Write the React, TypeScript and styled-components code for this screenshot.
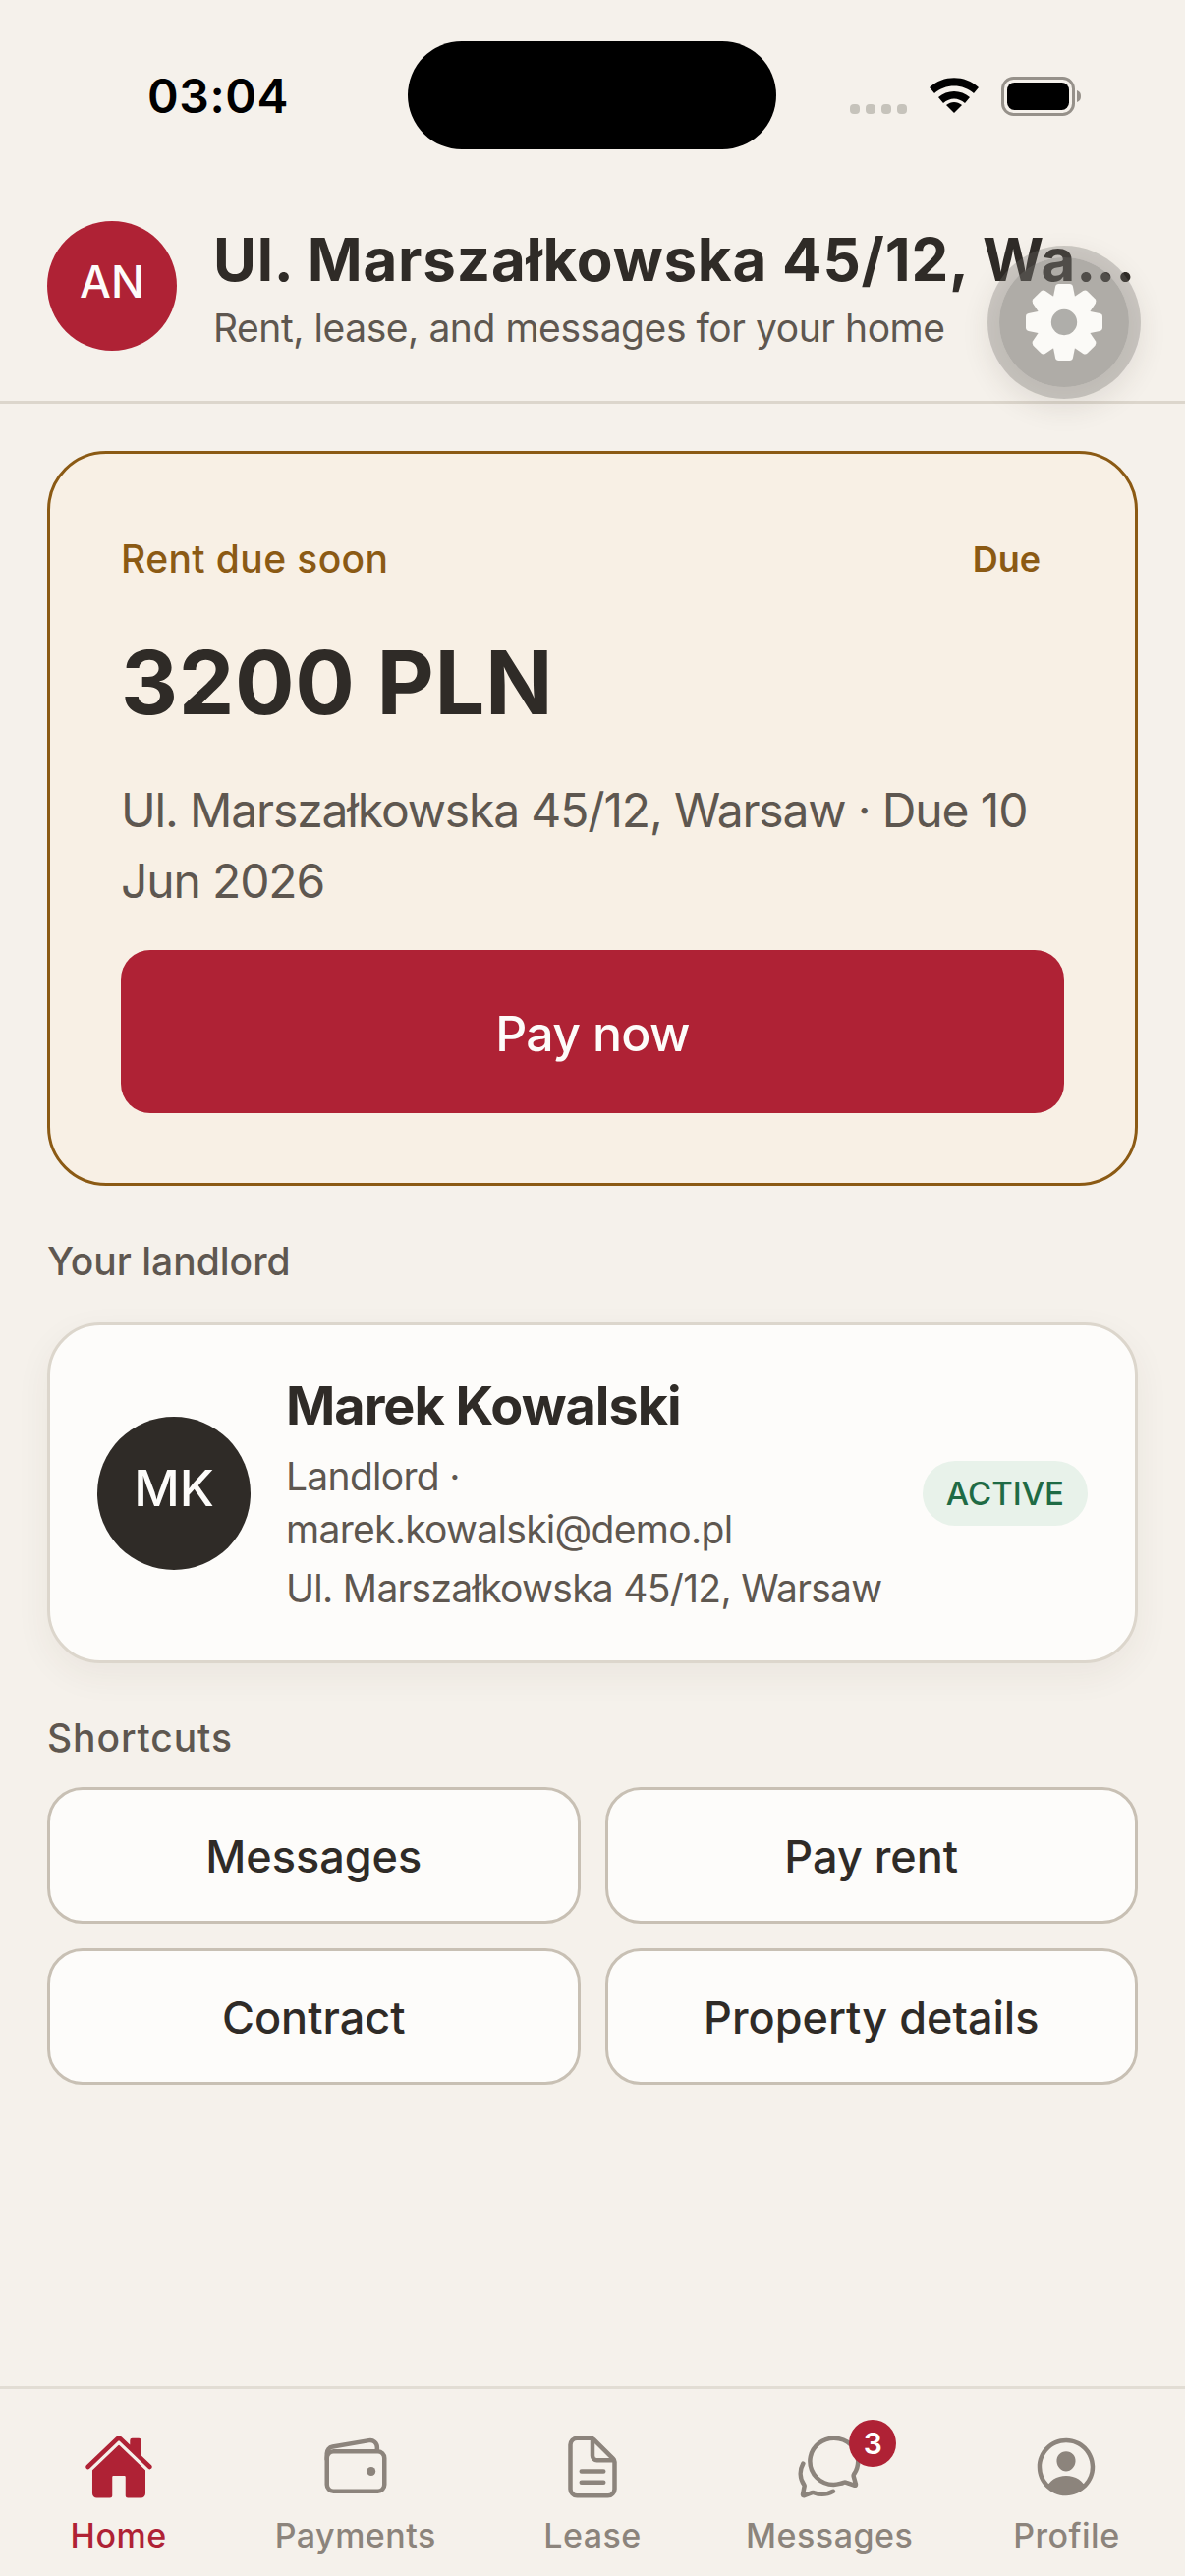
import React from "react";
import styled, { createGlobalStyle } from "styled-components";
import {
  IoHome,
  IoWalletOutline,
  IoDocumentTextOutline,
  IoChatbubblesOutline,
  IoPersonCircleOutline,
} from "react-icons/io5";

const GlobalStyle = createGlobalStyle`
  * { box-sizing: border-box; }
  html, body { margin: 0; padding: 0; background: #f5f1eb; }
  body { font-family: "Inter", "Noto Sans", sans-serif; }
`;

const Screen = styled.div`
  position: relative;
  width: 1206px;
  height: 2622px;
  display: flex;
  flex-direction: column;
  overflow: hidden;
  background: #f5f1eb;
  color: #2f2b27;
`;

const StatusBar = styled.div`
  height: 182px;
  padding-top: 42px;
  display: grid;
  grid-template-columns: 415px 375px 1fr;
  flex-shrink: 0;
`;

const Time = styled.div`
  padding: 27px 0 0 150px;
  font-size: 48px;
  line-height: 58px;
  font-weight: 600;
  letter-spacing: 0.6px;
  color: #000;
`;

const Island = styled.div`
  height: 110px;
  background: #000;
  border-radius: 55px;
`;

const StatusIcons = styled.div`
  display: flex;
  align-items: flex-start;
  padding: 36px 0 0 75px;
`;

const Dots = styled.div`
  display: flex;
  gap: 6px;
  margin-top: 28px;
  margin-right: 22px;
`;

const Dot = styled.span`
  width: 10px;
  height: 10px;
  border-radius: 4px;
  background: #c6c3bb;
`;

const Battery = styled.svg`
  margin-left: 22px;
`;

const Header = styled.header`
  height: 229px;
  padding: 43px 48px 0;
  display: flex;
  gap: 37px;
  border-bottom: 3px solid #dcd6cc;
  flex-shrink: 0;
`;

const Avatar = styled.div<{ $size: number; $bg: string; $font: number }>`
  width: ${(p) => p.$size}px;
  height: ${(p) => p.$size}px;
  padding-bottom: ${(p) => p.$font / 5}px;
  border-radius: 50%;
  background: ${(p) => p.$bg};
  color: #fdfcfa;
  font-size: ${(p) => p.$font}px;
  font-weight: 500;
  display: flex;
  align-items: center;
  justify-content: center;
  flex-shrink: 0;
`;

const HeaderText = styled.div`
  min-width: 0;
  flex: 1;
`;

const Title = styled.h1`
  margin: 3px 0 0;
  font-size: 60px;
  line-height: 72px;
  font-weight: 700;
  letter-spacing: 0.8px;
  white-space: nowrap;
  overflow: hidden;
  text-overflow: ellipsis;
`;

const Subtitle = styled.div`
  margin-top: 8px;
  font-size: 39px;
  line-height: 52px;
  letter-spacing: -0.45px;
  color: #5e5750;
`;

const Fab = styled.div`
  position: absolute;
  left: 1017px;
  top: 262px;
  width: 132px;
  height: 132px;
  border-radius: 50%;
  background: rgba(112, 110, 106, 0.52);
  box-shadow: 0 0 0 12px rgba(112, 110, 106, 0.3), 0 10px 28px 12px rgba(60, 50, 40, 0.1);
  display: flex;
  align-items: center;
  justify-content: center;
`;

const Main = styled.main`
  flex: 1;
  padding: 48px 48px 0;
`;

const DueCard = styled.section`
  height: 748px;
  border: 3px solid #8b5a14;
  border-radius: 60px;
  background: #f8f0e5;
  padding: 80px 72px 0;
`;

const DueTop = styled.div`
  display: flex;
  justify-content: space-between;
  padding-right: 24px;
  line-height: 54px;
  color: #8b5a14;
`;

const DueLabel = styled.span<{ $strong?: boolean }>`
  font-weight: ${(p) => (p.$strong ? 600 : 500)};
  font-size: ${(p) => (p.$strong ? 36 : 39)}px;
  letter-spacing: ${(p) => (p.$strong ? 0 : 0.4)}px;
`;

const Amount = styled.div`
  margin-top: 45px;
  font-size: 90px;
  line-height: 108px;
  font-weight: 700;
  letter-spacing: 0.6px;
`;

const DueText = styled.div`
  margin-top: 40px;
  font-size: 48px;
  line-height: 72px;
  letter-spacing: -1.15px;
  color: #5e5750;
`;

const PayButton = styled.button`
  display: block;
  width: 100%;
  height: 166px;
  margin-top: 34px;
  padding: 3px 0 0;
  border: 0;
  border-radius: 30px;
  background: #af2235;
  color: #fdfcfa;
  font-family: inherit;
  font-size: 50px;
  font-weight: 500;
  letter-spacing: -0.7px;
`;

const SectionLabel = styled.div<{ $top: number; $bottom: number; $tracking?: number }>`
  margin: ${(p) => p.$top}px 0 ${(p) => p.$bottom}px;
  font-size: 39px;
  line-height: 54px;
  font-weight: 500;
  letter-spacing: ${(p) => p.$tracking ?? 0}px;
  color: #5e5750;
`;

const LandlordCard = styled.section`
  height: 347px;
  padding: 0 48px;
  display: flex;
  align-items: center;
  gap: 36px;
  background: #fdfcfa;
  border: 3px solid #dcd6cc;
  border-radius: 54px;
  box-shadow: 0 12px 36px rgba(60, 50, 40, 0.06);
`;

const LandlordInfo = styled.div`
  flex: 1;
  min-width: 0;
  padding-top: 3px;
`;

const LandlordName = styled.div`
  font-size: 54px;
  line-height: 66px;
  font-weight: 700;
  letter-spacing: -1px;
  margin-bottom: 12px;
`;

const LandlordLine = styled.div<{ $tight?: boolean }>`
  font-size: 39px;
  line-height: 54px;
  letter-spacing: -0.7px;
  white-space: nowrap;
  color: #5e5750;
  margin-top: ${(p) => (p.$tight ? 6 : 0)}px;
`;

const StatusPill = styled.span`
  height: 66px;
  padding: 0 24px;
  display: flex;
  align-items: center;
  border-radius: 33px;
  background: #e8f2ea;
  color: #1f6b45;
  font-size: 33px;
  font-weight: 500;
`;

const ShortcutGrid = styled.div`
  display: grid;
  grid-template-columns: 1fr 1fr;
  gap: 25px;
`;

const Shortcut = styled.button`
  height: 139px;
  padding: 2px 0 0;
  border: 3px solid #c8c0b4;
  border-radius: 36px;
  background: #fdfcfa;
  color: #2f2b27;
  font-family: inherit;
  font-size: 45px;
  font-weight: 500;
`;

const TabBar = styled.nav`
  height: 193px;
  border-top: 3px solid #e2ddd4;
  display: grid;
  grid-template-columns: repeat(5, 1fr);
  flex-shrink: 0;
`;

const Tab = styled.div<{ $active?: boolean }>`
  display: flex;
  flex-direction: column;
  align-items: center;
  padding-top: 43px;
  color: ${(p) => (p.$active ? "#af2235" : "#8c847c")};
  font-size: 34px;
  line-height: 44px;
  letter-spacing: 0.5px;
  font-weight: 500;
`;

const TabIcon = styled.div`
  position: relative;
  height: 72px;
  margin-bottom: 12px;
`;

const Badge = styled.span`
  position: absolute;
  left: 56px;
  top: -12px;
  width: 48px;
  height: 48px;
  border-radius: 50%;
  background: #af2235;
  color: #fff;
  font-size: 30px;
  font-weight: 600;
  letter-spacing: 0;
  display: flex;
  align-items: center;
  justify-content: center;
`;

const tabs = [
  { label: "Home", Icon: IoHome, active: true },
  { label: "Payments", Icon: IoWalletOutline },
  { label: "Lease", Icon: IoDocumentTextOutline },
  { label: "Messages", Icon: IoChatbubblesOutline, badge: 3 },
  { label: "Profile", Icon: IoPersonCircleOutline },
];

const GearIcon = () => (
  <svg width="78" height="78" viewBox="0 0 77 77" fill="#fbfaf7">
    {[0, 45, 90, 135, 180, 225, 270, 315].map((angle) => (
      <path
        key={angle}
        d="M33 0h11a3.4 3.4 0 0 1 3.3 2.7L50 16H27L29.7 2.7A3.4 3.4 0 0 1 33 0z"
        transform={`rotate(${angle} 38.5 38.5)`}
      />
    ))}
    <circle cx="38.5" cy="38.5" r="27.5" />
    <circle cx="38.5" cy="38.5" r="13" fill="#afaeaa" />
  </svg>
);

function App() {
  return (
    <Screen>
      <GlobalStyle />
      <StatusBar>
        <Time>03:04</Time>
        <Island />
        <StatusIcons>
          <Dots>
            <Dot />
            <Dot />
            <Dot />
            <Dot />
          </Dots>
          <svg width="52" height="38" viewBox="0 0 52 38">
            <path d="M1 11 C15 -2 37 -2 51 11 L46 17 C35 7 17 7 6 17 Z" fill="#000" />
            <path d="M10 21 C19 13 33 13 42 21 L37 27 C30 21 22 21 15 27 Z" fill="#000" />
            <path d="M18 29 C23 25 29 25 34 29 L26 37 Z" fill="#000" />
          </svg>
          <Battery width="84" height="40" viewBox="0 0 84 40">
            <rect x="1.5" y="1.5" width="72" height="37" rx="11" fill="none" stroke="#96918a" strokeWidth="3" />
            <rect x="6" y="6" width="63" height="28" rx="7.5" fill="#000" />
            <path d="M77 14 C80 15 81 17 81 20 C81 23 80 25 77 26 Z" fill="#96918a" />
          </Battery>
        </StatusIcons>
      </StatusBar>

      <Header>
        <Avatar $size={132} $bg="#af2235" $font={45}>
          AN
        </Avatar>
        <HeaderText>
          <Title>Ul. Marszałkowska 45/12, Warsaw</Title>
          <Subtitle>Rent, lease, and messages for your home</Subtitle>
        </HeaderText>
      </Header>

      <Main>
        <DueCard>
          <DueTop>
            <DueLabel>Rent due soon</DueLabel>
            <DueLabel $strong>Due</DueLabel>
          </DueTop>
          <Amount>3200 PLN</Amount>
          <DueText>Ul. Marszałkowska 45/12, Warsaw · Due 10 Jun 2026</DueText>
          <PayButton>Pay now</PayButton>
        </DueCard>

        <SectionLabel $top={50} $bottom={35}>
          Your landlord
        </SectionLabel>
        <LandlordCard>
          <Avatar $size={156} $bg="#2f2b27" $font={51}>
            MK
          </Avatar>
          <LandlordInfo>
            <LandlordName>Marek Kowalski</LandlordName>
            <LandlordLine>Landlord ·</LandlordLine>
            <LandlordLine>marek.kowalski@demo.pl</LandlordLine>
            <LandlordLine $tight>Ul. Marszałkowska 45/12, Warsaw</LandlordLine>
          </LandlordInfo>
          <StatusPill>ACTIVE</StatusPill>
        </LandlordCard>

        <SectionLabel $top={49} $bottom={23} $tracking={0.9}>
          Shortcuts
        </SectionLabel>
        <ShortcutGrid>
          <Shortcut>Messages</Shortcut>
          <Shortcut>Pay rent</Shortcut>
          <Shortcut>Contract</Shortcut>
          <Shortcut>Property details</Shortcut>
        </ShortcutGrid>
      </Main>

      <TabBar>
        {tabs.map(({ label, Icon, active, badge }) => (
          <Tab key={label} $active={active}>
            <TabIcon>
              <Icon size={72} />
              {badge && <Badge>{badge}</Badge>}
            </TabIcon>
            {label}
          </Tab>
        ))}
      </TabBar>

      <Fab>
        <GearIcon />
      </Fab>
    </Screen>
  );
}

export default App;
